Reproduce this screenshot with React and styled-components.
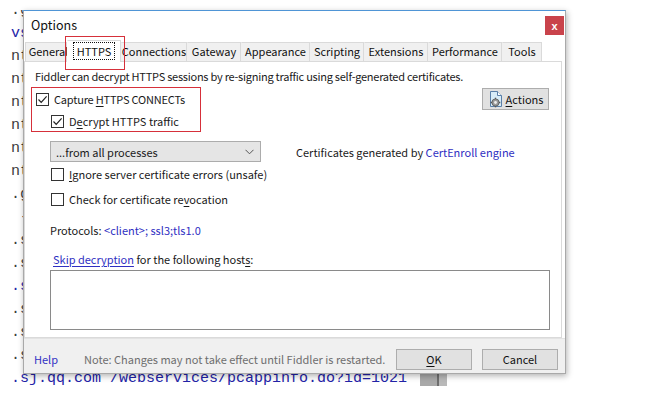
import React from "react";
import styled, { createGlobalStyle } from "styled-components";

const GlobalStyle = createGlobalStyle`
  html, body {
    margin: 0;
    padding: 0;
    background: #fff;
  }
  body {
    width: 645px;
    height: 402px;
    overflow: hidden;
  }
`;

const UI_FONT = `"Noto Sans CJK SC", "Liberation Sans", sans-serif`;

const Stage = styled.div`
  position: relative;
  width: 645px;
  height: 402px;
  overflow: hidden;
  background: #fff;
`;

const Backdrop = styled.div`
  margin-top: 10px;
  height: 382px;
  overflow: hidden;
  padding-left: 11px;
  font-family: "Liberation Mono", monospace;
  font-size: 15px;
  line-height: 23px;
  white-space: pre;
`;

const CodeList = styled.div`
  margin-top: -11px;
`;

const CodeLine = styled.div`
  display: flex;
  align-items: center;
  height: 23px;
  color: ${(p) => (p.$blue ? "#2323a8" : "#3c3c3c")};
`;

const ScrollThumb = styled.span`
  display: inline-block;
  width: 27px;
  height: 14px;
  margin-left: 13px;
  background: linear-gradient(90deg, #a9a9a9 0 62%, #6f6f6f 62% 70%, #b9b9b9 70%);
`;

const Dialog = styled.div`
  position: absolute;
  left: 23px;
  top: 10px;
  width: 543px;
  height: 364px;
  box-sizing: border-box;
  display: flex;
  flex-direction: column;
  background: #fff;
  border: 1px solid #a9a9a9;
  border-top-color: #4f95d6;
  box-shadow: 1px 2px 6px rgba(0, 0, 0, 0.3);
  font-family: ${UI_FONT};
  font-size: 11px;
  color: #1a1a1a;
`;

const TitleBar = styled.div`
  height: 29px;
  flex-shrink: 0;
  display: flex;
  align-items: flex-start;
  justify-content: space-between;
  padding-left: 7px;
`;

const Title = styled.div`
  margin-top: 4px;
  font-size: 12.5px;
  color: #111;
`;

const CloseButton = styled.div`
  width: 19px;
  height: 19px;
  margin: 5px 1px 0 0;
  background: #c9434b;
  color: #fff;
  display: flex;
  align-items: center;
  justify-content: center;
  font-family: "Liberation Sans", sans-serif;
  font-size: 11px;
  font-weight: bold;
`;

const TabStrip = styled.div`
  height: 21px;
  flex-shrink: 0;
  display: flex;
  align-items: flex-end;
  padding-left: 1px;
`;

const Tab = styled.div`
  box-sizing: border-box;
  flex-shrink: 0;
  width: ${(p) => p.$w}px;
  height: ${(p) => (p.$active ? 22 : 19)}px;
  display: flex;
  align-items: center;
  justify-content: center;
  padding-bottom: ${(p) => (p.$active ? 1 : 2)}px;
  padding-left: ${(p) => (p.$first ? 5 : 0)}px;
  background: ${(p) => (p.$active ? "#fff" : "#f0f0f0")};
  border: 1px solid #dadada;
  border-bottom: none;
  border-left-color: ${(p) => (p.$first ? "#dadada" : "transparent")};
  position: relative;
  z-index: ${(p) => (p.$active ? 1 : 0)};
  margin-bottom: ${(p) => (p.$active ? -1 : 0)}px;
  color: #111;
  white-space: nowrap;
`;

const FocusLabel = styled.span`
  padding: 0 3px;
  line-height: 16px;
  outline: 1px dotted #111;
`;

const Pane = styled.div`
  flex: 1;
  margin: 0 3px 0 0;
  border: 1px solid #dadada;
  background: #fff;
  display: flex;
  flex-direction: column;
  align-items: flex-start;
`;

const Line = styled.div`
  margin-top: ${(p) => p.$top || 0}px;
  margin-left: ${(p) => p.$left || 0}px;
  line-height: 16px;
  white-space: nowrap;
  letter-spacing: ${(p) => p.$ls || 0}px;
`;

const CheckRow = styled.label`
  display: flex;
  align-items: center;
  gap: 5px;
  height: 16px;
  margin-top: ${(p) => p.$top || 0}px;
  margin-left: ${(p) => p.$left || 0}px;
  white-space: nowrap;
  letter-spacing: ${(p) => p.$ls || 0}px;
`;

const Box = styled.span`
  width: 13px;
  height: 13px;
  flex-shrink: 0;
  box-sizing: border-box;
  border: 1px solid #333;
  background: #fff;
  display: flex;
  align-items: center;
  justify-content: center;
`;

const TopRow = styled.div`
  align-self: stretch;
  display: flex;
  align-items: center;
  justify-content: space-between;
  margin-top: 4px;
  padding: 0 12px 0 11px;
  height: 22px;
`;

const Button = styled.div`
  box-sizing: border-box;
  flex-shrink: 0;
  width: ${(p) => p.$w}px;
  height: ${(p) => p.$h || 21}px;
  display: flex;
  align-items: center;
  justify-content: center;
  gap: 1px;
  background: #e1e1e1;
  border: 1px solid #adadad;
  color: #111;
`;

const U = styled.span`
  text-decoration: underline;
  text-underline-offset: 2px;
`;

const SelectRow = styled.div`
  display: flex;
  align-items: center;
  margin-top: 12px;
  margin-left: 25px;
`;

const Select = styled.div`
  box-sizing: border-box;
  width: 211px;
  height: 21px;
  display: flex;
  align-items: center;
  justify-content: space-between;
  padding: 0 6px 0 5px;
  background: #e5e5e5;
  border: 1px solid #acacac;
`;

const CertText = styled.div`
  margin-left: 35px;
  white-space: nowrap;
`;

const Link = styled.span`
  color: #2f2fc2;
  text-decoration: ${(p) => (p.$u ? "underline" : "none")};
  text-underline-offset: 2px;
`;

const HostBox = styled.div`
  box-sizing: border-box;
  width: 500px;
  height: 60px;
  margin-top: 3px;
  margin-left: 25px;
  border: 1px solid #8a8a8a;
  background: #fff;
`;

const Footer = styled.div`
  box-sizing: border-box;
  height: 35px;
  flex-shrink: 0;
  display: flex;
  align-items: center;
  padding: 6px 7px 0 10px;
  background: #f0f0f0;
  border-top: 1px solid #e3e3e3;
`;

const Help = styled.span`
  color: #3232c4;
`;

const Note = styled.span`
  margin-left: 26px;
  color: #6e6e6e;
  white-space: nowrap;
`;

const ButtonGroup = styled.div`
  margin-left: auto;
  flex-shrink: 0;
  display: flex;
  gap: 10px;
`;

const Marker = styled.div`
  position: absolute;
  left: ${(p) => p.$x}px;
  top: ${(p) => p.$y}px;
  width: ${(p) => p.$w}px;
  height: ${(p) => p.$h}px;
  box-sizing: border-box;
  border: 1.5px solid #d6303a;
  pointer-events: none;
`;

const Check = ({ on }) => (
  <Box>
    {on && (
      <svg width="11" height="11" viewBox="0 0 11 11">
        <polyline points="1.5,5.5 4.2,8.3 9.6,2.4" fill="none" stroke="#222" strokeWidth="1.2" />
      </svg>
    )}
  </Box>
);

const ActionsIcon = () => (
  <svg width="17" height="18" viewBox="0 0 17 18">
    <path d="M2.5 1.5h7l4 4v11h-11z" fill="#d8ecf8" stroke="#5a7fa8" />
    <path d="M9.5 1.5v4h4" fill="#fff" stroke="#5a7fa8" />
    <circle cx="7.5" cy="12.5" r="3.6" fill="#9a9a9a" stroke="#555" strokeWidth="0.8" />
    <circle cx="7.5" cy="12.5" r="1.4" fill="#eee" />
    <g stroke="#555" strokeWidth="1.3">
      <line x1="7.5" y1="7.7" x2="7.5" y2="9" />
      <line x1="7.5" y1="16" x2="7.5" y2="17.3" />
      <line x1="2.7" y1="12.5" x2="4" y2="12.5" />
      <line x1="11" y1="12.5" x2="12.3" y2="12.5" />
    </g>
  </svg>
);

const Chevron = () => (
  <svg width="9" height="6" viewBox="0 0 9 6">
    <polyline points="0.5,0.8 4.5,4.8 8.5,0.8" fill="none" stroke="#555" strokeWidth="1" />
  </svg>
);

// only the first characters of the session list peek out beside the dialog
const codeLines = [
  { t: ".g" },
  { t: "vs", blue: true },
  { t: "nt" },
  { t: "nt" },
  { t: "nt" },
  { t: "nt" },
  { t: "nt" },
  { t: "nt" },
  { t: ".g" },
  { t: " -" },
  { t: ".s" },
  { t: ".s" },
  { t: ".s", blue: true },
  { t: ".s" },
  { t: ".s" },
  { t: ".s" },
];

const tabs = [
  { label: "General", w: 42 },
  { label: "HTTPS", w: 54, active: true },
  { label: "Connections", w: 66 },
  { label: "Gateway", w: 54 },
  { label: "Appearance", w: 69 },
  { label: "Scripting", w: 54 },
  { label: "Extensions", w: 64 },
  { label: "Performance", w: 74 },
  { label: "Tools", w: 40 },
];

export default function App() {
  return (
    <Stage>
      <GlobalStyle />
      <Backdrop>
        <CodeList>
          {codeLines.map((l, i) => (
            <CodeLine key={i} $blue={l.blue}>
              {l.t}
            </CodeLine>
          ))}
          <CodeLine $blue>
            .sj.qq.com /webservices/pcappinfo.do?id=1021
            <ScrollThumb />
          </CodeLine>
        </CodeList>
      </Backdrop>

      <Dialog>
        <TitleBar>
          <Title>Options</Title>
          <CloseButton>x</CloseButton>
        </TitleBar>

        <TabStrip>
          {tabs.map((t, i) => (
            <Tab key={t.label} $w={t.w} $active={t.active} $first={i === 0}>
              {t.active ? <FocusLabel>{t.label}</FocusLabel> : t.label}
            </Tab>
          ))}
        </TabStrip>

        <Pane>
          <Line $top={6} $left={10} $ls={-0.25}>
            Fiddler can decrypt HTTPS sessions by re-signing traffic using self-generated certificates.
          </Line>

          <TopRow>
            <CheckRow $ls={-0.2}>
              <Check on />
              <span>
                Capture <U>H</U>TTPS CONNECTs
              </span>
            </CheckRow>
            <Button $w={67} $h={22}>
              <ActionsIcon />
              <span>
                <U>A</U>ctions
              </span>
            </Button>
          </TopRow>

          <CheckRow $top={3} $left={26}>
            <Check on />
            <span>
              D<U>e</U>crypt HTTPS traffic
            </span>
          </CheckRow>

          <SelectRow>
            <Select>
              <span>...from all processes</span>
              <Chevron />
            </Select>
            <CertText>
              Certificates generated by <Link>CertEnroll engine</Link>
            </CertText>
          </SelectRow>

          <CheckRow $top={4} $left={26}>
            <Check />
            <span>
              <U>I</U>gnore server certificate errors (unsafe)
            </span>
          </CheckRow>

          <CheckRow $top={9} $left={26}>
            <Check />
            <span>
              Check for certificate re<U>v</U>ocation
            </span>
          </CheckRow>

          <Line $top={15} $left={25}>
            Protocols: <Link>&lt;client&gt;; ssl3;tls1.0</Link>
          </Line>

          <Line $top={13} $left={28}>
            <Link $u>Skip decryption</Link> for the following host<U>s</U>:
          </Line>

          <HostBox />
        </Pane>

        <Footer>
          <Help>Help</Help>
          <Note>Note: Changes may not take effect until Fiddler is restarted.</Note>
          <ButtonGroup>
            <Button $w={76}>
              <span>
                <U>O</U>K
              </span>
            </Button>
            <Button $w={76}>Cancel</Button>
          </ButtonGroup>
        </Footer>
      </Dialog>

      <Marker $x={65} $y={36} $w={60} $h={34} />
      <Marker $x={31} $y={87} $w={170} $h={45} />
    </Stage>
  );
}
